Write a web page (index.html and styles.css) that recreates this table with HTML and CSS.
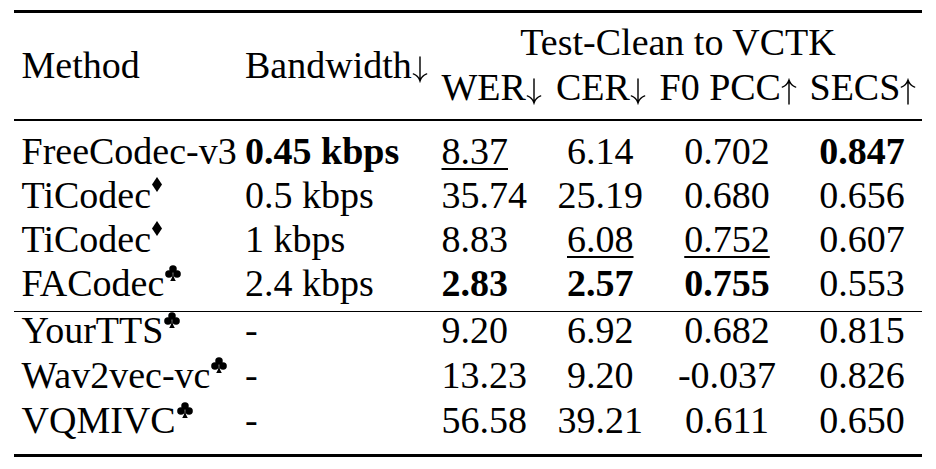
FILE: index.html
```html
<!DOCTYPE html>
<html lang="en">
<head>
<meta charset="utf-8">
<title>Table</title>
<link rel="stylesheet" href="styles.css">
</head>
<body>
<div class="table">
  <div class="head">
    <div class="cell method">Method</div>
    <div class="cell bw">Bandwidth<svg class="arrow" viewBox="0 0 18 28" aria-label="↓"><path d="M9 0.5V27.5M1.5 19.5Q7 21.5 9 27.5Q11 21.5 16.5 19.5"/></svg></div>
    <div class="cell group">Test-Clean to VCTK</div>
    <div class="cell left">WER<svg class="arrow" viewBox="0 0 18 28" aria-label="↓"><path d="M9 0.5V27.5M1.5 19.5Q7 21.5 9 27.5Q11 21.5 16.5 19.5"/></svg></div>
    <div class="cell center">CER<svg class="arrow" viewBox="0 0 18 28" aria-label="↓"><path d="M9 0.5V27.5M1.5 19.5Q7 21.5 9 27.5Q11 21.5 16.5 19.5"/></svg></div>
    <div class="cell center">F0 PCC<svg class="arrow up" viewBox="0 0 18 28" aria-label="↑"><path d="M9 27.5V0.5M1.5 8.5Q7 6.5 9 0.5Q11 6.5 16.5 8.5"/></svg></div>
    <div class="cell center">SECS<svg class="arrow up" viewBox="0 0 18 28" aria-label="↑"><path d="M9 27.5V0.5M1.5 8.5Q7 6.5 9 0.5Q11 6.5 16.5 8.5"/></svg></div>
  </div>
  <div class="body body1">
    <div class="row">
      <div class="cell left">FreeCodec-v3</div>
      <div class="cell left"><b>0.45 kbps</b></div>
      <div class="cell left"><span class="u">8.37</span></div>
      <div class="cell center">6.14</div>
      <div class="cell center">0.702</div>
      <div class="cell center"><b>0.847</b></div>
    </div>
    <div class="row">
      <div class="cell left">TiCodec<svg class="mark diamond" viewBox="0 0 10 15" aria-label="♦"><polygon points="5,0 10,7.5 5,15 0,7.5"/></svg></div>
      <div class="cell left">0.5 kbps</div>
      <div class="cell left">35.74</div>
      <div class="cell center">25.19</div>
      <div class="cell center">0.680</div>
      <div class="cell center">0.656</div>
    </div>
    <div class="row">
      <div class="cell left">TiCodec<svg class="mark diamond" viewBox="0 0 10 15" aria-label="♦"><polygon points="5,0 10,7.5 5,15 0,7.5"/></svg></div>
      <div class="cell left">1 kbps</div>
      <div class="cell left">8.83</div>
      <div class="cell center"><span class="u">6.08</span></div>
      <div class="cell center"><span class="u">0.752</span></div>
      <div class="cell center">0.607</div>
    </div>
    <div class="row">
      <div class="cell left">FACodec<svg class="mark club" viewBox="0 0 17 17" aria-label="♣"><circle cx="8.5" cy="4.3" r="4"/><circle cx="4.2" cy="9.6" r="4"/><circle cx="12.8" cy="9.6" r="4"/><path d="M8.5 6Q8.8 13 11.5 17H5.5Q8.2 13 8.5 6Z"/></svg></div>
      <div class="cell left">2.4 kbps</div>
      <div class="cell left"><b>2.83</b></div>
      <div class="cell center"><b>2.57</b></div>
      <div class="cell center"><b>0.755</b></div>
      <div class="cell center">0.553</div>
    </div>
  </div>
  <div class="body body2">
    <div class="row">
      <div class="cell left">YourTTS<svg class="mark club" viewBox="0 0 17 17" aria-label="♣"><circle cx="8.5" cy="4.3" r="4"/><circle cx="4.2" cy="9.6" r="4"/><circle cx="12.8" cy="9.6" r="4"/><path d="M8.5 6Q8.8 13 11.5 17H5.5Q8.2 13 8.5 6Z"/></svg></div>
      <div class="cell left">-</div>
      <div class="cell left">9.20</div>
      <div class="cell center">6.92</div>
      <div class="cell center">0.682</div>
      <div class="cell center">0.815</div>
    </div>
    <div class="row">
      <div class="cell left">Wav2vec-vc<svg class="mark club" viewBox="0 0 17 17" aria-label="♣"><circle cx="8.5" cy="4.3" r="4"/><circle cx="4.2" cy="9.6" r="4"/><circle cx="12.8" cy="9.6" r="4"/><path d="M8.5 6Q8.8 13 11.5 17H5.5Q8.2 13 8.5 6Z"/></svg></div>
      <div class="cell left">-</div>
      <div class="cell left">13.23</div>
      <div class="cell center">9.20</div>
      <div class="cell center">-0.037</div>
      <div class="cell center">0.826</div>
    </div>
    <div class="row">
      <div class="cell left">VQMIVC<svg class="mark club" viewBox="0 0 17 17" aria-label="♣"><circle cx="8.5" cy="4.3" r="4"/><circle cx="4.2" cy="9.6" r="4"/><circle cx="12.8" cy="9.6" r="4"/><path d="M8.5 6Q8.8 13 11.5 17H5.5Q8.2 13 8.5 6Z"/></svg></div>
      <div class="cell left">-</div>
      <div class="cell left">56.58</div>
      <div class="cell center">39.21</div>
      <div class="cell center">0.611</div>
      <div class="cell center">0.650</div>
    </div>
  </div>
</div>
</body>
</html>
```

FILE: styles.css
```css
html, body {
  margin: 0;
  padding: 0;
  background: #ffffff;
}

body {
  font-family: "Liberation Serif", "Times New Roman", serif;
  font-size: 38px;
  color: #000000;
}

.table {
  width: 908px;
  margin: 10px 0 0 14px;
  border-top: 3px solid #000000;
  border-bottom: 3.5px solid #000000;
}

.head,
.row {
  display: grid;
  grid-template-columns: 223.5px 196.5px 114.5px 103.5px 150px 120px;
}

.head {
  grid-template-rows: 45px 45px;
  line-height: 45px;
  padding: 7px 0 9px;
  border-bottom: 2px solid #000000;
}

.cell {
  padding: 0 7.5px;
  white-space: nowrap;
}

.left {
  text-align: left;
}

.center {
  text-align: center;
}

.method {
  grid-column: 1;
  grid-row: 1 / 3;
  align-self: center;
}

.bw {
  grid-column: 2;
  grid-row: 1 / 3;
  align-self: center;
}

.group {
  grid-column: 3 / 7;
  grid-row: 1;
  text-align: center;
}

.body1 {
  padding: 8px 0 6px;
  border-bottom: 1.5px solid #000000;
}

.body1 .row {
  height: 44px;
  line-height: 44px;
}

.body2 {
  padding: 0 0 7px;
}

.body2 .row {
  height: 45px;
  line-height: 37px;
  align-items: start;
}

b {
  font-weight: bold;
}

.u {
  text-decoration: underline;
  text-decoration-thickness: 1.5px;
  text-underline-offset: 4px;
}

.arrow {
  width: 16px;
  height: 28px;
  margin-left: 0;
  vertical-align: -5px;
  fill: none;
  stroke: #000000;
  stroke-width: 1.6;
  stroke-linecap: round;
}

.arrow.up {
  vertical-align: -6px;
}

.mark {
  margin-left: 1px;
  fill: #000000;
}

.diamond {
  width: 10px;
  height: 15px;
  vertical-align: 16px;
}

.club {
  width: 16px;
  height: 16px;
  vertical-align: 15px;
}
```
